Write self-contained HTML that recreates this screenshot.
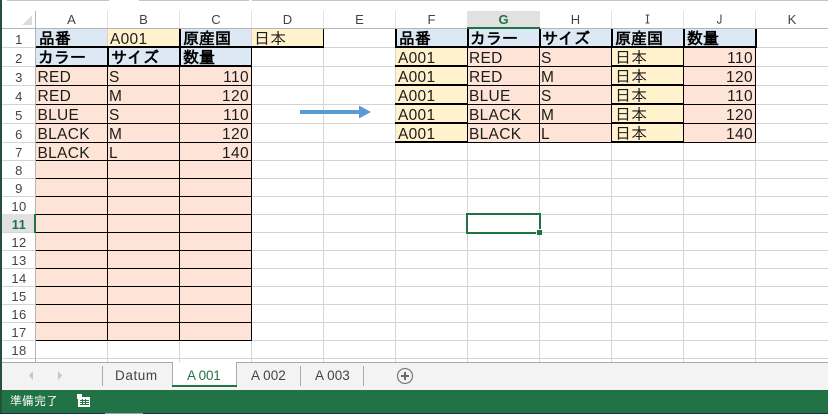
<!DOCTYPE html>
<html lang="ja"><head><meta charset="utf-8"><title>Sheet</title>
<style>
html,body{margin:0;padding:0;background:#fff;width:828px;height:414px;overflow:hidden}
svg{display:block}
.r{shape-rendering:crispEdges}
text{font-family:"Liberation Sans","IPAGothic",sans-serif;fill:#1c1c1c}
.t{font-size:15.5px;letter-spacing:.3px}
.n{font-size:15.5px;text-anchor:end;letter-spacing:.4px}
.j{font-family:"IPAGothic","Liberation Sans",sans-serif;font-size:16px}
.b{font-family:"IPAGothic","Liberation Sans",sans-serif;font-size:16px;font-weight:bold;fill:#000}
.h{font-size:13px;fill:#444;text-anchor:middle}
.m{font-size:13.5px;fill:#444;letter-spacing:.6px}
</style></head><body>
<svg width="828" height="414" viewBox="0 0 828 414" xmlns="http://www.w3.org/2000/svg">
<g class="r">
<rect width="828" height="414" fill="#fff"/>
<rect x="0" width="2" height="414" fill="#24503c"/>
<path d="M7 0H109V1H7ZM139 0H249V1H139ZM252 0H828V1H252Z" fill="#c4c4c4"/>

<!-- grid -->
<path fill="#d4d4d4" d="M2 47H828V48H2ZM2 66H828V67H2ZM2 85H828V86H2ZM2 104H828V105H2ZM2 123H828V124H2ZM2 142H828V143H2ZM2 160H828V161H2ZM2 178H828V179H2ZM2 196H828V197H2ZM2 214H828V215H2ZM2 232H828V233H2ZM2 250H828V251H2ZM2 268H828V269H2ZM2 286H828V287H2ZM2 304H828V305H2ZM2 322H828V323H2ZM2 340H828V341H2ZM2 358H828V359H2Z"/>
<path fill="#d4d4d4" d="M107 29V362H108V29ZM179 29V362H180V29ZM251 29V362H252V29ZM323 29V362H324V29ZM395 29V362H396V29ZM467 29V362H468V29ZM539 29V362H540V29ZM611 29V362H612V29ZM683 29V362H684V29ZM755 29V362H756V29Z"/>

<!-- headers -->
<rect x="467" y="11" width="72" height="17" fill="#e1e1e1"/>
<rect x="2" y="214" width="33" height="18" fill="#e1e1e1"/>
<path fill="#e2e2e2" d="M35 11h1v17h-1zM107 11h1v17h-1zM179 11h1v17h-1zM251 11h1v17h-1zM323 11h1v17h-1zM395 11h1v17h-1zM539 11h1v17h-1zM611 11h1v17h-1zM683 11h1v17h-1zM755 11h1v17h-1z"/>
<rect x="2" y="28" width="826" height="1" fill="#b4b4b4"/>
<rect x="467" y="27" width="73" height="2" fill="#217346"/>
<rect x="35" y="11" width="1" height="351" fill="#b4b4b4"/>
<rect x="34" y="214" width="2" height="19" fill="#217346"/>
<polygon points="32,15 32,25 22,25" fill="#dcdcdc"/>

<!-- left table fills -->
<rect x="36" y="29" width="71" height="18" fill="#dce9f5"/>
<rect x="108" y="29" width="71" height="18" fill="#fff2cc"/>
<rect x="180" y="29" width="71" height="18" fill="#dce9f5"/>
<rect x="252" y="29" width="71" height="18" fill="#fff2cc"/>
<rect x="36" y="47" width="215" height="19" fill="#dce9f5"/>
<rect x="36" y="66" width="215" height="274" fill="#fde4d7"/>

<!-- left table lines -->
<path fill="#000" d="M36 85H252V86H36ZM36 104H252V105H36ZM36 123H252V124H36ZM36 142H252V143H36ZM36 160H252V161H36ZM36 178H252V179H36ZM36 196H252V197H36ZM36 214H252V215H36ZM36 232H252V233H36ZM36 250H252V251H36ZM36 268H252V269H36ZM36 286H252V287H36ZM36 304H252V305H36ZM36 322H252V323H36ZM36 340H252V341H36Z"/>
<path fill="#000" d="M107 66H108V341H107ZM179 66H180V341H179ZM251 47H252V341H251Z"/>
<path fill="#000" d="M36 46H324V48H36ZM36 65H252V67H36ZM107 47H109V66H107ZM179 29H181V66H179ZM323 29H324V48H323Z"/>

<!-- right table fills -->
<rect x="396" y="29" width="359" height="18" fill="#dce9f5"/>
<rect x="396" y="47" width="71" height="95" fill="#fff2cc"/>
<rect x="468" y="47" width="143" height="95" fill="#fde4d7"/>
<rect x="612" y="47" width="71" height="95" fill="#fff2cc"/>
<rect x="684" y="47" width="71" height="95" fill="#fde4d7"/>

<!-- right table lines -->
<path fill="#000" d="M468 66H756V67H468ZM468 85H756V86H468ZM468 104H756V105H468ZM468 123H756V124H468ZM468 142H756V143H468Z"/>
<path fill="#000" d="M395 65H468V67H395ZM395 84H468V86H395ZM395 103H468V105H395ZM395 122H468V124H395ZM395 141H468V143H395ZM611 65H684V67H611ZM611 84H684V86H611ZM611 103H684V105H611ZM611 122H684V124H611ZM611 141H684V143H611Z"/>
<path fill="#000" d="M467 47H468V143H467ZM539 47H540V143H539ZM611 47H612V143H611ZM683 47H684V143H683ZM755 47H756V143H755Z"/>
<path fill="#000" d="M395 46H757V48H395ZM395 29H397V48H395ZM467 29H469V48H467ZM539 29H541V48H539ZM611 29H613V48H611ZM683 29H685V48H683ZM755 29H757V48H755Z"/>

<!-- selection -->
<path fill="#217346" d="M466 213H541V215H466ZM466 232H536V234H466ZM466 213H468V234H466ZM539 213H541V229H539Z"/>
<rect x="537" y="230" width="5" height="5" fill="#217346"/>

<!-- arrow -->
<rect x="300" y="110" width="60" height="4" fill="#5b9bd5"/>
</g>
<polygon points="359,105.500 371,112 359,118.500" fill="#5b9bd5"/>

<!-- col labels -->
<g>
<text class="h" x="71.500" y="24">A</text><text class="h" x="143.500" y="24">B</text><text class="h" x="216" y="24">C</text><text class="h" x="287.500" y="24">D</text><text class="h" x="359.500" y="24">E</text><text class="h" x="431.500" y="24">F</text>
<text class="h" x="503.500" y="24" style="fill:#217346;font-weight:bold">G</text>
<text class="h" x="575.500" y="24">H</text><text class="h" x="647.500" y="24" style="font-family:IPAGothic,monospace">I</text><text class="h" x="719.500" y="24" style="font-family:IPAGothic,monospace">J</text><text class="h" x="792" y="24">K</text>
</g>
<!-- row labels -->
<g style="letter-spacing:.4px">
<text class="h" x="19" y="44">1</text><text class="h" x="19" y="63">2</text><text class="h" x="19" y="82">3</text><text class="h" x="19" y="101">4</text><text class="h" x="19" y="120">5</text><text class="h" x="19" y="139">6</text><text class="h" x="19" y="157">7</text><text class="h" x="19" y="175">8</text><text class="h" x="19" y="193">9</text><text class="h" x="19" y="211">10</text>
<text class="h" x="19" y="229" style="fill:#217346;font-weight:bold">11</text>
<text class="h" x="19" y="247">12</text><text class="h" x="19" y="265">13</text><text class="h" x="19" y="283">14</text><text class="h" x="19" y="301">15</text><text class="h" x="19" y="319">16</text><text class="h" x="19" y="337">17</text><text class="h" x="19" y="355">18</text>
</g>

<!-- left table text -->
<text class="b" x="39" y="44">品番</text>
<text class="t" x="110" y="44">A001</text>
<text class="b" x="183" y="44">原産国</text>
<text class="j" x="254" y="44">日本</text>
<text class="b" x="38" y="63">カラー</text>
<text class="b" x="111" y="63">サイズ</text>
<text class="b" x="183" y="63">数量</text>

<text class="t" x="37.500" y="82">RED</text><text class="t" x="109" y="82">S</text><text class="n" x="249" y="82">110</text>
<text class="t" x="37.500" y="101">RED</text><text class="t" x="109" y="101">M</text><text class="n" x="249" y="101">120</text>
<text class="t" x="37.500" y="120">BLUE</text><text class="t" x="109" y="120">S</text><text class="n" x="249" y="120">110</text>
<text class="t" x="37.500" y="139">BLACK</text><text class="t" x="109" y="139">M</text><text class="n" x="249" y="139">120</text>
<text class="t" x="37.500" y="158">BLACK</text><text class="t" x="109" y="158">L</text><text class="n" x="249" y="158">140</text>

<!-- right table text -->
<text class="b" x="399" y="44">品番</text><text class="b" x="470" y="44">カラー</text><text class="b" x="542" y="44">サイズ</text><text class="b" x="615" y="44">原産国</text><text class="b" x="687" y="44">数量</text>

<text class="t" x="398" y="63">A001</text><text class="t" x="469" y="63">RED</text><text class="t" x="541" y="63">S</text><text class="j" x="615" y="63">日本</text><text class="n" x="753" y="63">110</text>
<text class="t" x="398" y="82">A001</text><text class="t" x="469" y="82">RED</text><text class="t" x="541" y="82">M</text><text class="j" x="615" y="82">日本</text><text class="n" x="753" y="82">120</text>
<text class="t" x="398" y="101">A001</text><text class="t" x="469" y="101">BLUE</text><text class="t" x="541" y="101">S</text><text class="j" x="615" y="101">日本</text><text class="n" x="753" y="101">110</text>
<text class="t" x="398" y="120">A001</text><text class="t" x="469" y="120">BLACK</text><text class="t" x="541" y="120">M</text><text class="j" x="615" y="120">日本</text><text class="n" x="753" y="120">120</text>
<text class="t" x="398" y="139">A001</text><text class="t" x="469" y="139">BLACK</text><text class="t" x="541" y="139">L</text><text class="j" x="615" y="139">日本</text><text class="n" x="753" y="139">140</text>

<!-- tab bar -->
<g class="r">
<rect x="2" y="362" width="826" height="28" fill="#f3f3f3"/>
<rect x="2" y="362" width="826" height="1" fill="#ababab"/>
<rect x="102" y="366" width="1" height="20" fill="#ababab"/>
<rect x="300" y="366" width="1" height="20" fill="#ababab"/>
<rect x="363" y="366" width="1" height="20" fill="#ababab"/>
<rect x="173" y="362" width="64" height="24" fill="#fff"/>
<rect x="172" y="362" width="1" height="24" fill="#ababab"/>
<rect x="236" y="362" width="1" height="24" fill="#ababab"/>
<rect x="172" y="385" width="65" height="2" fill="#217346"/>
<rect x="2" y="390" width="826" height="23" fill="#217346"/>
<rect x="0" y="413" width="828" height="1" fill="#14324a"/>
<path d="M105 413h38v1h-38z" fill="#9aa5a5"/>
</g>
<polygon points="33,371 33,380 29,375.500" fill="#c6c6c6"/>
<polygon points="58,371 58,380 62,375.500" fill="#c6c6c6"/>
<text class="m" x="115" y="380">Datum</text>
<text class="m" x="187" y="380" style="fill:#217346;letter-spacing:.2px" textLength="34">A 001</text>
<text class="m" x="251" y="380" style="letter-spacing:.2px" textLength="35">A 002</text>
<text class="m" x="315" y="380" style="letter-spacing:.2px" textLength="35">A 003</text>
<circle cx="405" cy="376" r="7.500" fill="none" stroke="#7f7f7f" stroke-width="1.300"/>
<path d="M405 372v8M401 376h8" stroke="#6a6a6a" stroke-width="2" fill="none"/>

<!-- status -->
<text x="10" y="405" style="font-family:'IPAGothic','Noto Sans CJK JP',sans-serif;font-size:12px;fill:#fff">準備完了</text>
<g class="r">
<rect x="78" y="397" width="12" height="10" fill="#fff"/>
<rect x="77" y="394" width="5" height="5" fill="#fff"/>
<path d="M80 400h9v1h-9zM80 402h9v1h-9zM80 404h9v1h-9zM82 399h1v6h-1zM85 399h1v6h-1z" fill="#217346"/>
</g>
</svg>
</body></html>
